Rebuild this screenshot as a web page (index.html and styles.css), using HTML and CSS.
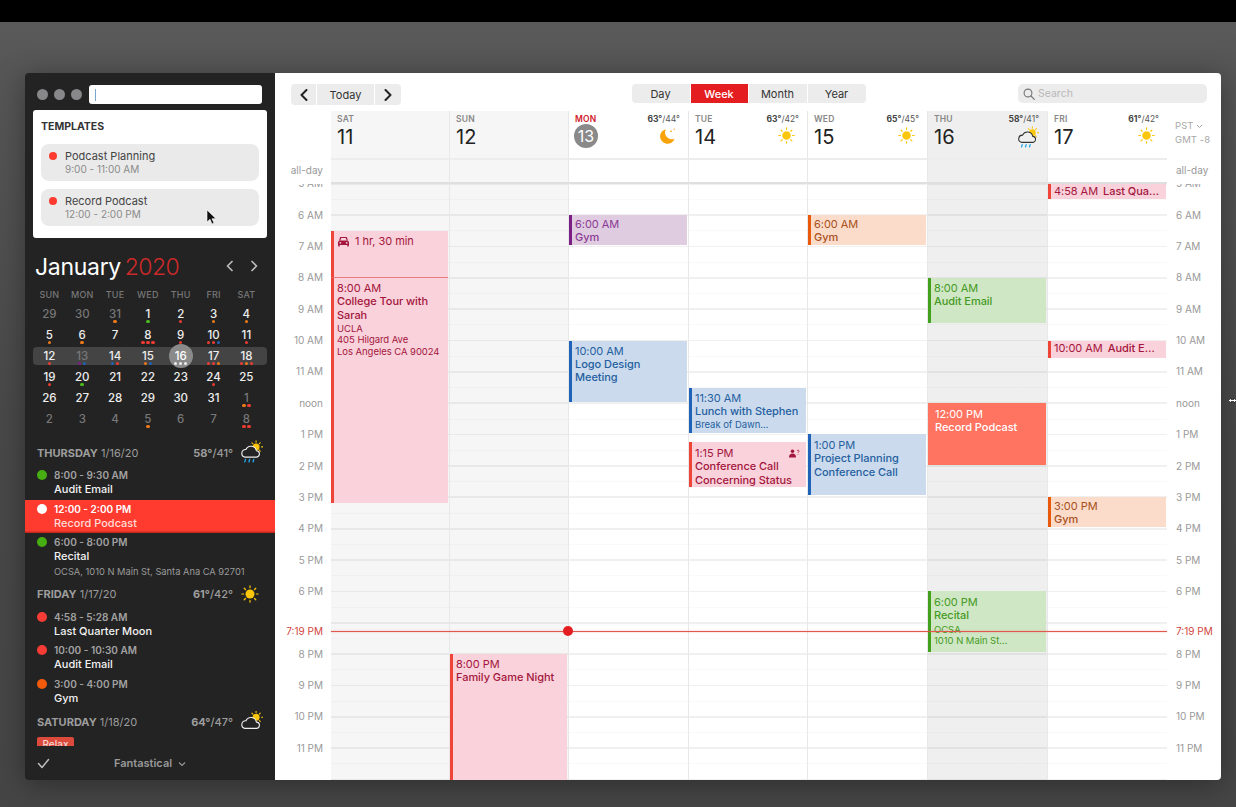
FILE: index.html
```html
<!DOCTYPE html>
<html lang="en">
<head>
<meta charset="utf-8">
<title>Fantastical</title>
<link rel="stylesheet" href="styles.css">
</head>
<body>
<svg class="defs" width="0" height="0" aria-hidden="true">
  <symbol id="sun" viewBox="0 0 24 24">
    <circle cx="12" cy="12" r="6" fill="#fcc60a"/>
    <g stroke="#fcc60a" stroke-width="1.6" stroke-linecap="round" stroke-dasharray="2.4 30">
      <path d="M12 3.500V0M12 20.500v3.500M3.500 12H0M20.500 12H24M6 6 3.500 3.500M18 18l2.500 2.500M6 18l-2.500 2.500M18 6l2.500-2.500"/>
    </g>
  </symbol>
  <symbol id="moon" viewBox="0 0 24 24">
    <path d="M10 3A10.500 10.500 0 1 0 22 16.500 9.500 9.500 0 0 1 10 3Z" fill="#f9a30a"/>
    <circle cx="17" cy="6" r="1.200" fill="#f9a30a"/><circle cx="21.500" cy="3" r="1" fill="#f9a30a"/>
  </symbol>
  <symbol id="rain" viewBox="0 0 26 24">
    <circle cx="18.500" cy="6.500" r="3.800" fill="#fcc60a"/>
    <path d="M18.500 0v1.400M24.500 6.500h1.400M23 2l-1 1M23 11l-1-1M14 2l1 1" stroke="#fcc60a" stroke-width="1.200" stroke-linecap="round"/>
    <path d="M6 17.500h12.500a3.400 3.400 0 0 0 .4-6.800 6 6 0 0 0-11.400-1.400A4.200 4.200 0 0 0 6 17.500Z" fill="var(--cloud-bg,#efefef)" stroke="var(--cloud,#333)" stroke-width="1.200"/>
    <path d="M7 20l-.7 2.600M11.500 20l-.7 2.600M16 20l-.7 2.600" stroke="#23a6e8" stroke-width="1.500" stroke-linecap="round"/>
  </symbol>
  <symbol id="cloud" viewBox="0 0 26 24">
    <circle cx="18.500" cy="8" r="3.800" fill="#fcc60a"/>
    <path d="M18.500 1.500v1.400M24.500 8h1.400M23 3.500l-1 1M23 12.500l-1-1M14 3.500l1 1" stroke="#fcc60a" stroke-width="1.200" stroke-linecap="round"/>
    <path d="M6 20h12.500a3.400 3.400 0 0 0 .4-6.800 6 6 0 0 0-11.400-1.400A4.200 4.200 0 0 0 6 20Z" fill="#232323" stroke="#eee" stroke-width="1.200"/>
  </symbol>
</svg>

<div class="blackbar"></div>
<div class="desk">
  <div class="window">
    <aside class="sidebar">
      <div class="titlebar">
        <span class="light"></span><span class="light"></span><span class="light"></span>
        <div class="quick"><span class="caret"></span></div>
      </div>
      <section class="templates">
        <h2>TEMPLATES</h2>
        <div class="tpl"><span class="tpl-dot"></span><div><p class="tpl-name">Podcast Planning</p><p class="tpl-time">9:00 - 11:00 AM</p></div></div>
        <div class="tpl"><span class="tpl-dot"></span><div><p class="tpl-name">Record Podcast</p><p class="tpl-time">12:00 - 2:00 PM</p></div></div>
        <svg class="pointer" width="12" height="16" viewBox="0 0 12 16"><path d="M1 1v12l3-2.800L6 15l2-1-2-4.300h4Z" fill="#111" stroke="#fff" stroke-width=".6"/></svg>
      </section>

      <div class="month-head">
        <h1>January <span>2020</span></h1>
        <svg class="m-nav" width="34" height="14" viewBox="0 0 34 14"><path d="M7 2.500 2.500 7 7 11.500M27 2.500 31.500 7 27 11.500" fill="none" stroke="#bbb" stroke-width="1.700" stroke-linecap="round" stroke-linejoin="round"/></svg>
      </div>

      <div class="mini">
        <div class="mrow dow"><span>SUN</span><span>MON</span><span>TUE</span><span>WED</span><span>THU</span><span>FRI</span><span>SAT</span></div>
        <div class="mrow">
          <div class="d off">29<u></u></div><div class="d off">30<u></u></div><div class="d off">31<u><i class="o"></i></u></div><div class="d">1<u><i class="g"></i></u></div><div class="d">2<u><i class="r"></i></u></div><div class="d">3<u><i class="o"></i></u></div><div class="d">4<u><i class="o"></i></u></div>
        </div>
        <div class="mrow">
          <div class="d">5<u><i class="o"></i></u></div><div class="d">6<u><i class="o"></i></u></div><div class="d">7<u></u></div><div class="d">8<u><i class="r"></i><i class="r"></i><i class="r"></i></u></div><div class="d">9<u><i class="r"></i></u></div><div class="d">10<u><i class="r"></i><i class="r"></i><i class="b"></i></u></div><div class="d">11<u><i class="r"></i></u></div>
        </div>
        <div class="mrow week">
          <div class="d">12<u><i class="r"></i></u></div><div class="d dim">13<u><i class="p"></i><i class="b"></i></u></div><div class="d">14<u><i class="b"></i><i class="r"></i></u></div><div class="d">15<u><i class="o"></i><i class="b"></i></u></div><div class="d sel">16<u><i class="w"></i><i class="w"></i><i class="w"></i></u></div><div class="d">17<u><i class="r"></i><i class="r"></i><i class="o"></i></u></div><div class="d">18<u><i class="r"></i><i class="o"></i><i class="r"></i></u></div>
        </div>
        <div class="mrow">
          <div class="d">19<u><i class="r"></i></u></div><div class="d">20<u><i class="g"></i></u></div><div class="d">21<u></u></div><div class="d">22<u></u></div><div class="d">23<u></u></div><div class="d">24<u><i class="r"></i></u></div><div class="d">25<u></u></div>
        </div>
        <div class="mrow">
          <div class="d">26<u></u></div><div class="d">27<u></u></div><div class="d">28<u></u></div><div class="d">29<u></u></div><div class="d">30<u></u></div><div class="d">31<u></u></div><div class="d off">1<u><i class="o"></i><i class="r"></i></u></div>
        </div>
        <div class="mrow">
          <div class="d off">2<u></u></div><div class="d off">3<u></u></div><div class="d off">4<u></u></div><div class="d off">5<u><i class="o"></i></u></div><div class="d off">6<u></u></div><div class="d off">7<u></u></div><div class="d off">8<u><i class="r"></i><i class="r"></i></u></div>
        </div>
      </div>

      <div class="agenda">
        <div class="ag-head"><span class="ag-date"><b>THURSDAY</b> 1/16/20</span><span class="ag-temp"><b>58°</b>/41°</span><svg class="ag-icon"><use href="#rain"/></svg></div>
        <div class="item"><span class="dot green"></span><p class="it-time">8:00 - 9:30 AM</p><p class="it-name">Audit Email</p></div>
        <div class="item active"><span class="dot white"></span><p class="it-time">12:00 - 2:00 PM</p><p class="it-name">Record Podcast</p></div>
        <div class="item tall"><span class="dot green"></span><p class="it-time">6:00 - 8:00 PM</p><p class="it-name">Recital</p><p class="it-addr">OCSA, 1010 N Main St, Santa Ana CA 92701</p></div>
        <div class="ag-head"><span class="ag-date"><b>FRIDAY</b> 1/17/20</span><span class="ag-temp"><b>61°</b>/42°</span><svg class="ag-sun"><use href="#sun"/></svg></div>
        <div class="item"><span class="dot red"></span><p class="it-time">4:58 - 5:28 AM</p><p class="it-name">Last Quarter Moon</p></div>
        <div class="item"><span class="dot red"></span><p class="it-time">10:00 - 10:30 AM</p><p class="it-name">Audit Email</p></div>
        <div class="item"><span class="dot orange"></span><p class="it-time">3:00 - 4:00 PM</p><p class="it-name">Gym</p></div>
        <div class="ag-head"><span class="ag-date"><b>SATURDAY</b> 1/18/20</span><span class="ag-temp"><b>64°</b>/47°</span><svg class="ag-icon"><use href="#cloud"/></svg></div>
        <div class="chip">Relax</div>
      </div>

      <footer class="side-foot">
        <svg class="check" width="13" height="11" viewBox="0 0 13 11"><path d="M1.500 5.500 5 9.500l6.500-8" fill="none" stroke="#bdbdbd" stroke-width="1.500" stroke-linecap="round" stroke-linejoin="round"/></svg>
        <span class="cal-name">Fantastical <svg class="cal-chev" width="8" height="6" viewBox="0 0 8 6"><path d="M1 1.500 4 4.500 7 1.500" fill="none" stroke="#999" stroke-width="1.100"/></svg></span>
      </footer>
    </aside>

    <main class="main">
      <div class="toolbar">
        <div class="nav">
          <button class="btn arrow"><svg width="8" height="12" viewBox="0 0 8 12"><path d="M6.500 1 1.500 6l5 5" fill="none" stroke="#222" stroke-width="2" stroke-linecap="round" stroke-linejoin="round"/></svg></button>
          <button class="btn today">Today</button>
          <button class="btn arrow"><svg width="8" height="12" viewBox="0 0 8 12"><path d="M1.500 1 6.500 6l-5 5" fill="none" stroke="#222" stroke-width="2" stroke-linecap="round" stroke-linejoin="round"/></svg></button>
        </div>
        <div class="seg">
          <button class="sbtn first">Day</button><button class="sbtn on">Week</button><button class="sbtn">Month</button><button class="sbtn last">Year</button>
        </div>
        <div class="search">
          <svg width="12" height="12" viewBox="0 0 12 12"><circle cx="5" cy="5" r="3.900" fill="none" stroke="#777" stroke-width="1.100"/><path d="M8 8l3.300 3.300" stroke="#777" stroke-width="1.200" stroke-linecap="round"/></svg>
          <span>Search</span>
        </div>
      </div>

      <div class="grid head">
        <div></div>
        <div class="hd wkend"><div class="hd-text"><span class="dn">SAT</span><span class="num">11</span></div></div>
        <div class="hd wkend"><div class="hd-text"><span class="dn">SUN</span><span class="num">12</span></div></div>
        <div class="hd"><div class="hd-text"><span class="dn red-t">MON</span><span class="num today-n">13</span></div><div class="wx"><span class="temp"><b>63°</b>/44°</span><svg class="wx-i"><use href="#moon"/></svg></div></div>
        <div class="hd"><div class="hd-text"><span class="dn">TUE</span><span class="num">14</span></div><div class="wx"><span class="temp"><b>63°</b>/42°</span><svg class="wx-i"><use href="#sun"/></svg></div></div>
        <div class="hd"><div class="hd-text"><span class="dn">WED</span><span class="num">15</span></div><div class="wx"><span class="temp"><b>65°</b>/45°</span><svg class="wx-i"><use href="#sun"/></svg></div></div>
        <div class="hd cur"><div class="hd-text"><span class="dn">THU</span><span class="num">16</span></div><div class="wx"><span class="temp"><b>58°</b>/41°</span><svg class="wx-rain"><use href="#rain"/></svg></div></div>
        <div class="hd last-c"><div class="hd-text"><span class="dn">FRI</span><span class="num">17</span></div><div class="wx"><span class="temp"><b>61°</b>/42°</span><svg class="wx-i"><use href="#sun"/></svg></div></div>
        <div class="tz"><span>PST <svg width="7" height="5" viewBox="0 0 7 5"><path d="M1 1l2.500 2.500L6 1" fill="none" stroke="#aaa"/></svg></span><span>GMT -8</span></div>
      </div>

      <div class="grid allday">
        <div class="ad-l">all-day</div>
        <div class="ad wkend"></div><div class="ad wkend"></div><div class="ad"></div><div class="ad"></div><div class="ad"></div><div class="ad cur"></div><div class="ad last-c"></div>
        <div class="ad-r">all-day</div>
      </div>

      <div class="grid scroller">
        <div class="hours left">
          <span>5 AM</span><span>6 AM</span><span>7 AM</span><span>8 AM</span><span>9 AM</span><span>10 AM</span><span>11 AM</span><span>noon</span><span>1 PM</span><span>2 PM</span><span>3 PM</span><span>4 PM</span><span>5 PM</span><span>6 PM</span><span class="hide">7 PM</span><span>8 PM</span><span>9 PM</span><span>10 PM</span><span>11 PM</span>
        </div>

        <div class="day wkend">
          <div class="ev pink travel" style="top:47px;height:47px"><svg width="13" height="11" viewBox="0 0 13 11"><path d="M2.700 4.500 3.700 1.500h5.600l1 3" fill="none" stroke="#a3163d" stroke-width="1.200"/><path d="M1 9V6l1.200-1.500h8.600L12 6v3Z" fill="#a3163d"/><path d="M2 9v1.500M11 9v1.500" stroke="#a3163d" stroke-width="1.500"/><circle cx="3.300" cy="6.800" r=".9" fill="#fad2db"/><circle cx="9.700" cy="6.800" r=".9" fill="#fad2db"/></svg><span>1 hr, 30 min</span></div>
          <div class="ev pink" style="top:94px;height:225px"><p class="t">8:00 AM</p><p class="n">College Tour with Sarah</p><p class="s first-s">UCLA</p><p class="s">405 Hilgard Ave</p><p class="s">Los Angeles CA 90024</p></div>
        </div>
        <div class="day wkend">
          <div class="ev pink wide-bar" style="top:470px;height:130px"><p class="t">8:00 PM</p><p class="n">Family Game Night</p></div>
        </div>
        <div class="day">
          <div class="ev purple gym" style="top:31px;height:30px"><p class="t">6:00 AM</p><p class="n">Gym</p></div>
          <div class="ev blue" style="top:156.500px;height:61px"><p class="t">10:00 AM</p><p class="n">Logo Design Meeting</p></div>
        </div>
        <div class="day">
          <div class="ev blue" style="top:203.500px;height:45px"><p class="t">11:30 AM</p><p class="n">Lunch with Stephen</p><p class="s first-s">Break of Dawn…</p></div>
          <div class="ev pink low" style="top:258px;height:45px"><p class="t">1:15 PM</p><p class="n">Conference Call Concerning Status</p><svg class="att" width="12" height="9" viewBox="0 0 12 9"><circle cx="4.500" cy="2.300" r="1.800" fill="#a3163d"/><path d="M1 8.500c0-3 1.500-4 3.500-4s3.500 1 3.500 4Z" fill="#a3163d"/><path d="M9 2c.3-1.200 2.200-1 2 .2-.1.800-1 .8-1 1.600M10 5v.6" fill="none" stroke="#a3163d" stroke-width=".8"/></svg></div>
        </div>
        <div class="day">
          <div class="ev orange-e gym" style="top:31px;height:30px"><p class="t">6:00 AM</p><p class="n">Gym</p></div>
          <div class="ev blue low" style="top:250px;height:61px"><p class="t">1:00 PM</p><p class="n">Project Planning Conference Call</p></div>
        </div>
        <div class="day cur">
          <div class="ev green-e" style="top:94px;height:45px"><p class="t">8:00 AM</p><p class="n">Audit Email</p></div>
          <div class="ev solid low" style="top:219px;height:62px"><p class="t">12:00 PM</p><p class="n">Record Podcast</p></div>
          <div class="ev green-e low" style="top:407px;height:61px"><p class="t">6:00 PM</p><p class="n">Recital</p><p class="s first-s">OCSA</p><p class="s">1010 N Main St…</p></div>
        </div>
        <div class="day last-c">
          <div class="ev pink single" style="top:0;height:15px"><p class="t">4:58 AM</p><p class="n">Last Qua…</p></div>
          <div class="ev pink single" style="top:156.500px;height:17px"><p class="t">10:00 AM</p><p class="n">Audit E…</p></div>
          <div class="ev orange-e gym" style="top:313px;height:30px"><p class="t">3:00 PM</p><p class="n">Gym</p></div>
        </div>

        <div class="hours right">
          <span>5 AM</span><span>6 AM</span><span>7 AM</span><span>8 AM</span><span>9 AM</span><span>10 AM</span><span>11 AM</span><span>noon</span><span>1 PM</span><span>2 PM</span><span>3 PM</span><span>4 PM</span><span>5 PM</span><span>6 PM</span><span class="hide">7 PM</span><span>8 PM</span><span>9 PM</span><span>10 PM</span><span>11 PM</span>
        </div>

        <div class="now">
          <span class="now-l">7:19 PM</span>
          <span class="now-line"></span>
          <span class="now-dot"></span>
          <span class="now-r">7:19 PM</span>
        </div>
      </div>
    </main>
  </div>
</div>
<svg class="resize" width="9" height="7" viewBox="0 0 9 7"><path d="M.5 3.500 3 1v1.500h3V1l2.500 2.500L6 6V4.500H3V6Z" fill="#fff" stroke="#111" stroke-width=".6"/></svg>
</body>
</html>
```
FILE: styles.css
```css
* { box-sizing: border-box; }
html, body { margin: 0; height: 100%; }
body {
  width: 1236px; height: 807px; overflow: hidden; position: relative;
  background: #4a4a4a;
  font-family: Inter, "Liberation Sans", sans-serif;
  display: flex; flex-direction: column;
}
p, h1, h2 { margin: 0; font-weight: inherit; }
button { font: inherit; border: 0; padding: 0; }
.defs { position: absolute; }
.blackbar { height: 22px; background: #000; flex: none; }
.desk {
  flex: 1; padding: 51px 15px 27px 25px;
  background: linear-gradient(#5a5a5a, #555 60px, #484848 400px, #454545);
}
.window {
  height: 707px; display: flex; overflow: hidden;
  border-radius: 4px; box-shadow: 0 4px 28px rgba(0,0,0,.35);
}

/* sidebar */
.sidebar { width: 250px; flex: none; background: #232323; display: flex; flex-direction: column; color: #fff; }
.titlebar { height: 37px; display: flex; align-items: center; padding: 5px 13px 0 12px; flex: none; }
.light { width: 11px; height: 11px; border-radius: 50%; background: #88888a; margin-right: 6px; }
.quick { flex: 1; height: 19px; background: #fff; border-radius: 3px; margin-left: 1px; padding: 4px 6px; }
.caret { display: block; width: 1px; height: 12px; background: #7aa5cc; }
.templates { position: relative; margin: 0 8px; height: 128px; background: #fff; border-radius: 3px; padding: 10px 8px 0; flex: none; }
.templates h2 { font-size: 10.500px; font-weight: 700; line-height: 13px; color: #333; margin-bottom: 11px; }
.tpl { height: 37px; background: #eaeaea; border-radius: 8px; margin-bottom: 8px; display: flex; padding: 5px 0 0 8px; }
.tpl-dot { width: 8px; height: 8px; border-radius: 50%; background: #ff3b30; margin: 3px 8px 0 0; flex: none; }
.tpl-name { font-size: 11px; line-height: 14px; color: #444; }
.tpl-time { font-size: 10px; line-height: 12px; color: #8a8a8a; }
.pointer { position: absolute; left: 173px; top: 99px; }
.month-head { height: 47px; flex: none; display: flex; align-items: center; justify-content: space-between; padding: 11px 16px 0 10px; }
.month-head h1 { font-size: 23px; line-height: 28px; font-weight: 400; color: #fff; letter-spacing: -.3px; word-spacing: -2.500px; }
.month-head h1 span { color: #cc2a2a; font-weight: 300; letter-spacing: -.5px; }
.m-nav { margin-top: -2px; }
.mini { margin: 0 8px; flex: none; }
.mrow { display: grid; grid-template-columns: repeat(7, 32.830px); height: 21px; }
.dow { height: 20px; font-size: 9px; font-weight: 500; color: #777; letter-spacing: .2px; line-height: 20px; text-align: center; }
.d { font-size: 11.500px; font-weight: 500; line-height: 15px; padding-top: 2px; text-align: center; position: relative; color: #eee; height: 21px; }
.d u { display: flex; justify-content: center; gap: 1.500px; height: 3.500px; text-decoration: none; margin-top: -2.500px; }
.d i { width: 3.500px; height: 3.500px; border-radius: 50%; display: block; }
.d i.r { background: #ef3c33; } .d i.o { background: #f07a1a; } .d i.g { background: #4cbc20; }
.d i.b { background: #1e63b8; } .d i.p { background: #7b1f87; } .d i.w { background: #eee; }
.off { color: #777; }
.dim { color: #777; }
.week { background: #444; border-radius: 4px; height: 18px; margin-bottom: 3px; position: relative; }
.sel { z-index: 0; color: #fff; }
.sel::before { content: ""; position: absolute; left: 4.500px; top: -3px; width: 24px; height: 24px; border-radius: 50%; background: #8a8a8a; z-index: -1; }

.agenda { flex: 1; margin-top: 8px; overflow: hidden; min-height: 0; }
.ag-head { height: 27px; display: flex; align-items: center; padding: 0 24px 0 12px; position: relative; font-size: 11px; color: #9d9d9d; }
.ag-date { flex: 1; }
.ag-date b, .ag-temp b { font-weight: 700; }
.ag-temp { font-weight: 500; margin-right: 18px; }
.ag-icon { position: absolute; right: 12px; top: 1px; width: 24px; height: 24px; --cloud: #eee; --cloud-bg: #232323; }
.ag-sun { position: absolute; right: 16px; top: 4px; width: 18px; height: 18px; }
.item { height: 33.500px; position: relative; padding: 2px 0 0 29px; }
.tall { height: 47.500px; }
.dot { position: absolute; left: 12px; top: 4px; width: 10px; height: 10px; border-radius: 50%; }
.green { background: #46ae12; } .red { background: #f73c36; } .orange { background: #f25a0c; } .white { background: #fff; }
.it-time { font-size: 10px; font-weight: 600; line-height: 14px; color: #a2a2a2; }
.it-name { font-size: 11px; font-weight: 500; line-height: 14.500px; color: #f2f2f2; }
.it-addr { font-size: 9.300px; line-height: 15px; color: #9a9a9a; }
.active { background: #ff3b30; box-shadow: inset 0 -1.500px 0 #c42a20; }
.active .it-time { color: #fff; }
.active .it-name { color: #ffdcd8; }
.chip { margin: 1.500px 0 0 12px; width: 37px; height: 16px; background: #dc4a3c; border-radius: 2px; font-size: 10px; line-height: 15px; text-align: center; color: #f4d6d2; font-weight: 500; }
.side-foot { height: 34px; flex: none; display: flex; align-items: center; padding: 0 0 0 12px; position: relative; }
.cal-name { position: absolute; left: 89px; font-size: 11px; font-weight: 600; color: #999; top: 10px; }
.cal-chev { margin-left: 3px; }

/* main */
.main { flex: 1; background: #fff; display: flex; flex-direction: column; min-width: 0; position: relative; }
.toolbar { height: 38px; flex: none; display: flex; align-items: flex-start; padding: 11px 14px 0 16px; position: relative; }
.nav { display: flex; gap: 1px; }
.btn { height: 21px; background: #ececec; color: #333; font-size: 11px; display: flex; align-items: center; justify-content: center; }
.arrow { width: 25px; border-radius: 4px 0 0 4px; }
.arrow:last-child { width: 26px; border-radius: 0 4px 4px 0; }
.today { width: 57px; }
.seg { display: flex; gap: 1px; margin-left: 231px; }
.sbtn { width: 58px; height: 19px; background: #ececec; font-size: 11px; color: #333; padding-right: 1px; }
.first { border-radius: 4px 0 0 4px; }
.last { border-radius: 0 4px 4px 0; }
.on { background: #e41e20; color: #fff; font-weight: 500; width: 57px; }
.search { margin-left: auto; width: 189px; height: 19px; background: #ececec; border-radius: 5px; display: flex; align-items: center; padding-left: 5px; gap: 3px; color: #b9b9b9; font-size: 10.500px; }

.grid { display: grid; grid-template-columns: 56px 119px 119px 120px 119px 120px 120px 119px 54px; flex: none; }
.head { height: 49px; }
.hd { border-right: 1px solid #e8e8e8; border-bottom: 2px solid #ededed; display: flex; justify-content: space-between; padding: 0 8px 0 6px; }
.wkend { background-color: #f6f6f6; }
.cur { background-color: #efefef; }
.hd-text { display: flex; flex-direction: column; }
.dn { font-size: 8.500px; font-weight: 600; color: #888; line-height: 11px; margin-top: 3px; letter-spacing: .2px; }
.red-t { color: #d0202a; }
.num { font-size: 20px; line-height: 24px; color: #222; margin-top: 0; font-weight: 400; }
.today-n { width: 24px; height: 24px; border-radius: 50%; background: #8a8a8a; color: #fff; font-size: 16px; text-align: center; margin: -1px 0 0 -1px; }
.wx { display: flex; flex-direction: column; align-items: flex-end; }
.temp { font-size: 8.500px; line-height: 11px; margin-top: 3px; color: #555; }
.temp b { font-weight: 700; color: #444; }
.wx-i { width: 17px; height: 17px; margin: 2px 4px 0 0; }
.wx-rain { width: 23px; height: 23px; margin: 1px 0 0 0; }
.tz { display: flex; flex-direction: column; padding: 8px 0 0 8px; font-size: 9.500px; color: #a8a8a8; line-height: 13.500px; letter-spacing: .1px; }
.allday { height: 24px; }
.ad { border-right: 1px solid #e8e8e8; border-bottom: 2px solid #dfdfdf; }
.ad-l, .ad-r { font-size: 10px; color: #999; line-height: 20px; }
.ad-l { text-align: right; padding-right: 8px; }
.ad-r { padding-left: 9px; }
.scroller { flex: 1; min-height: 0; overflow: hidden; position: relative; height: 596px; }
.hours { display: flex; flex-direction: column; margin-top: -15.680px; font-size: 10px; color: #999; }
.hours span { height: 31.360px; flex: none; line-height: 31.360px; }
.left { text-align: right; padding-right: 8px; }
.right { padding-left: 9px; }
.hide { visibility: hidden; }
.day {
  position: relative;
  border-right: 1px solid #e8e8e8;
  background-image: repeating-linear-gradient(to bottom,
    rgba(0,0,0,.06) 0, rgba(0,0,0,.06) .6px, transparent .6px, transparent 15px,
    rgba(0,0,0,.025) 15px, rgba(0,0,0,.025) 16px, transparent 16px, transparent 30.200px,
    rgba(0,0,0,.06) 30.200px, rgba(0,0,0,.06) 31.360px);
}
.hd.last-c, .ad.last-c, .day.last-c { border-right: 0; }
.ev { position: absolute; left: 0; right: 1px; padding: 4px 4px 0 3px; border-left: 3px solid; font-size: 11px; line-height: 13.300px; letter-spacing: -.05px; overflow: hidden; }
.ev .t { font-weight: 400; }
.ev .n { font-weight: 500; }
.ev .s { font-size: 9.500px; line-height: 11.500px; font-weight: 400; }
.ev .first-s { margin-top: 1px; }
.gym { padding-top: 3px; }
.low { padding-top: 5px; }
.pink { background: #fad2db; border-color: #ef4438; color: #a3163d; }
.purple { background: #e0cce0; border-color: #7b1f87; color: #8b3a96; }
.orange-e { background: #fbdccb; border-color: #e8590c; color: #a8501c; }
.blue { background: #cbdbed; border-color: #1e63b8; color: #2560a0; }
.green-e { background: #d0e7c5; border-color: #43a01c; color: #459a24; }
.solid { background: #ff7361; border-left: 0; color: #fff; padding-left: 7px; }
.travel { display: flex; align-items: flex-start; gap: 5px; padding-top: 4px; border-bottom: 1.500px solid #e87b7b; }
.travel svg { margin-top: 1px; flex: none; }
.wide-bar { border-left-width: 3.500px; }
.single { display: flex; gap: 5px; padding-top: 1px; white-space: nowrap; }
.att { position: absolute; right: 6px; top: 7px; }
.now { position: absolute; left: 0; right: 0; top: 447px; height: 0; }
.now-line { position: absolute; left: 56px; width: 836px; top: 0; height: 1px; background: #e0574e; box-shadow: 0 0 2px rgba(224,87,78,.5); }
.now-dot { position: absolute; left: 288px; top: -5px; width: 10px; height: 10px; border-radius: 50%; background: #e41e20; }
.now-l, .now-r { position: absolute; top: -7px; font-size: 10px; line-height: 14px; color: #d2453e; font-weight: 400; }
.now-l { right: 898px; }
.now-r { left: 901px; }
.resize { position: absolute; left: 1228px; top: 397px; }
```
